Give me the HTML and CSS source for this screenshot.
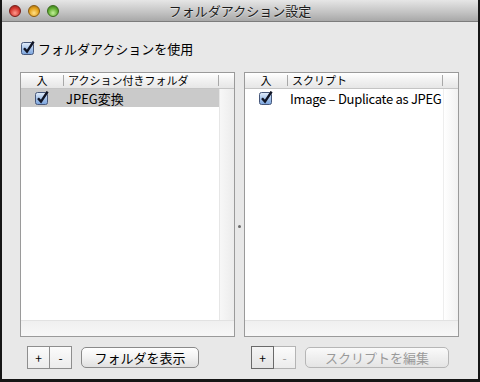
FILE: index.html
```html
<!DOCTYPE html>
<html lang="ja">
<head>
  <meta charset="UTF-8">
  <title>フォルダアクション設定</title>
  <link rel="stylesheet" href="styles.css">
</head>
<body>
  <div class="window">
    <div class="titlebar">
      <div class="lights">
        <span class="light red"></span>
        <span class="light yellow"></span>
        <span class="light green"></span>
      </div>
      <div class="title">フォルダアクション設定</div>
      <div></div>
    </div>

    <div class="content">
      <label class="enable">
        <svg class="check" width="14" height="14" viewBox="0 0 14 14">
          <defs>
            <linearGradient id="cb1" x1="0" y1="0" x2="0" y2="1">
              <stop offset="0" stop-color="#e4eefa"/>
              <stop offset="0.5" stop-color="#a9c6ec"/>
              <stop offset="1" stop-color="#7aa3dc"/>
            </linearGradient>
          </defs>
          <rect x="0.5" y="1.5" width="12" height="12" rx="2" fill="url(#cb1)" stroke="#46577a"/>
          <path d="M3 7.2 L6 10.6 L12.6 0.6" fill="none" stroke="#101424" stroke-width="2.4"/>
        </svg>
        <span>フォルダアクションを使用</span>
      </label>

      <div class="panes">
        <div class="pane">
          <div class="table">
            <div class="head">
              <span class="c1">入</span>
              <span class="sep"></span>
              <span class="c2">アクション付きフォルダ</span>
              <span class="sep"></span>
              <span class="c3"></span>
            </div>
            <div class="rows">
              <div class="list">
                <div class="row selected">
                  <span class="c1">
                    <svg class="check" width="14" height="14" viewBox="0 0 14 14">
                      <rect x="0.5" y="1.5" width="12" height="12" rx="2" fill="url(#cb1)" stroke="#46577a"/>
                      <path d="M3 7.2 L6 10.6 L12.6 0.6" fill="none" stroke="#101424" stroke-width="2.4"/>
                    </svg>
                  </span>
                  <span class="c2">JPEG変換</span>
                </div>
              </div>
              <div class="vscroll"></div>
            </div>
            <div class="hscroll"></div>
          </div>
          <div class="actions">
            <div class="segment">
              <button class="seg">+</button>
              <button class="seg">-</button>
            </div>
            <button class="push">フォルダを表示</button>
          </div>
        </div>

        <div class="splitter"><span class="grip"></span></div>

        <div class="pane">
          <div class="table">
            <div class="head">
              <span class="c1">入</span>
              <span class="sep"></span>
              <span class="c2">スクリプト</span>
              <span class="sep"></span>
              <span class="c3"></span>
            </div>
            <div class="rows">
              <div class="list">
                <div class="row">
                  <span class="c1">
                    <svg class="check" width="14" height="14" viewBox="0 0 14 14">
                      <rect x="0.5" y="1.5" width="12" height="12" rx="2" fill="url(#cb1)" stroke="#46577a"/>
                      <path d="M3 7.2 L6 10.6 L12.6 0.6" fill="none" stroke="#101424" stroke-width="2.4"/>
                    </svg>
                  </span>
                  <span class="c2 latin">Image – Duplicate as JPEG</span>
                </div>
              </div>
              <div class="vscroll white"></div>
            </div>
            <div class="hscroll"></div>
          </div>
          <div class="actions">
            <div class="segment">
              <button class="seg pressed">+</button>
              <button class="seg" disabled>-</button>
            </div>
            <button class="push wide" disabled>スクリプトを編集</button>
          </div>
        </div>
      </div>
    </div>
  </div>
</body>
</html>
```

FILE: styles.css
```css
/* Ventana */
body {
  margin: 0;
  background-color: #000000;
}
.window {
  width: 480px;
  height: 382px;
  box-sizing: border-box;
  border: 2px solid #161616;
  border-top: 0;
  border-bottom-width: 3px;
  background-color: #e8e8e8;
  display: flex;
  flex-direction: column;
  font-family: "Noto Sans CJK JP", sans-serif;
  font-size: 13px;
  color: #000000;
}

/* Barra de título */
.titlebar {
  height: 21px;
  border-bottom: 1px solid #7c7c7c;
  background: linear-gradient(#e6e6e6, #c2c2c2 60%, #a8a8a8);
  display: grid;
  grid-template-columns: 1fr auto 1fr;
  align-items: center;
}
.lights {
  display: flex;
  gap: 7px;
  padding-left: 7px;
  padding-top: 1px;
}
.light {
  width: 12px;
  height: 12px;
  border-radius: 50%;
  box-sizing: border-box;
}
.red {
  background: radial-gradient(circle at 50% 70%, #ff9a8e, #d63a32 55%, #8e1a14);
  border: 1px solid #7a1d18;
}
.yellow {
  background: radial-gradient(circle at 50% 70%, #ffe08a, #e4a21c 55%, #98620c);
  border: 1px solid #8a5a10;
}
.green {
  background: radial-gradient(circle at 50% 70%, #c4f09a, #62ae32 55%, #2c6e14);
  border: 1px solid #3a6a1c;
}
.title {
  font-size: 13px;
  color: #1c1c1c;
  text-shadow: 0 1px 0 rgba(255, 255, 255, 0.5);
  line-height: 21px;
}

/* Contenido */
.content {
  flex-grow: 1;
  padding: 19px 19px 0 18px;
  display: flex;
  flex-direction: column;
}
.enable {
  display: flex;
  align-items: center;
  gap: 3px;
  height: 14px;
  padding-left: 1px;
  font-size: 13px;
}
.check {
  display: block;
  flex-shrink: 0;
}
.panes {
  display: flex;
  margin-top: 17px;
}
.pane {
  width: 215px;
  display: flex;
  flex-direction: column;
}
.splitter {
  width: 9px;
  display: flex;
  justify-content: center;
  padding-top: 153px;
  box-sizing: border-box;
}
.grip {
  width: 3px;
  height: 3px;
  border-radius: 50%;
  background-color: #6c6c6c;
}

/* Tablas */
.table {
  height: 265px;
  box-sizing: border-box;
  border: 1px solid #9a9a9a;
  background-color: #ffffff;
  display: flex;
  flex-direction: column;
}
.head {
  height: 15px;
  border-bottom: 1px solid #c4c4c4;
  background: linear-gradient(#ffffff, #f1f1f1 50%, #e6e6e6);
  display: flex;
  align-items: center;
  font-size: 11px;
  line-height: 15px;
}
.head .c1 {
  width: 42px;
  text-align: center;
}
.head .c2 {
  flex-grow: 1;
  padding-left: 4px;
}
.head .c3 {
  width: 15px;
}
.sep {
  width: 1px;
  height: 11px;
  background-color: #a8a8a8;
}
.rows {
  flex-grow: 1;
  display: flex;
}
.list {
  flex-grow: 1;
}
.row {
  height: 18px;
  display: flex;
  align-items: center;
  font-size: 13px;
}
.row.selected {
  background-color: #cacaca;
}
.row .c1 {
  width: 42px;
  display: flex;
  justify-content: center;
}
.row .c2 {
  padding-left: 3px;
  white-space: nowrap;
}
.row .latin {
  letter-spacing: -0.3px;
}
.vscroll {
  width: 14px;
  border-left: 1px solid #e6e6e6;
  background: linear-gradient(to right, #f7f7f7, #ececec);
}
.vscroll.white {
  border-left-color: #eeeeee;
  background: linear-gradient(to right, #ffffff, #f1f1f1);
}
.hscroll {
  height: 15px;
  border-top: 1px solid #e2e2e2;
  background: linear-gradient(#f0f0f0, #f7f7f7);
}

/* Botones */
.actions {
  display: flex;
  gap: 9px;
  margin-top: 9px;
  padding-left: 7px;
  align-items: flex-start;
}
.segment {
  display: flex;
}
button {
  font-family: "Noto Sans CJK JP", sans-serif;
  color: #000000;
  padding: 0;
  margin: 0;
}
.seg {
  width: 23px;
  height: 23px;
  border: 1px solid #8e8e8e;
  background: linear-gradient(#fbfbfb, #ececec);
  font-size: 12px;
  line-height: 18px;
}
.seg + .seg {
  border-left: 0;
  width: 22px;
}
.seg.pressed {
  border-color: #6a6a6a;
  background: linear-gradient(#f4f4f4, #e4e4e4);
}
.seg:disabled {
  color: #9c9c9c;
  border-color: #b4b4b4;
}
.push {
  width: 118px;
  height: 21px;
  margin-top: 1px;
  border: 1px solid #8a8a8a;
  border-radius: 5px;
  background: linear-gradient(#ffffff, #f2f2f2 50%, #e0e0e0);
  font-size: 13px;
  line-height: 18px;
}
.push.wide {
  width: 144px;
}
.push:disabled {
  color: #9a9a9a;
  border-color: #b6b6b6;
  background: linear-gradient(#fafafa, #efefef 50%, #e4e4e4);
}
```
